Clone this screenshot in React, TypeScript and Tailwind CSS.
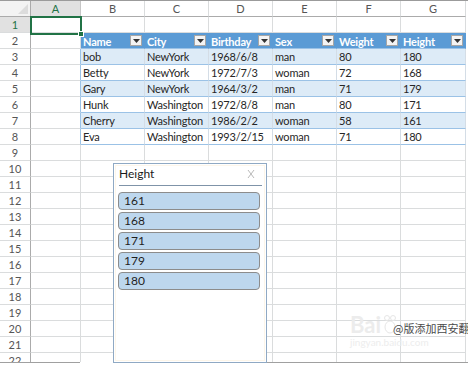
import clsx from "clsx";

const letters = ["A", "B", "C", "D", "E", "F", "G"];
const colW = ["w-[50px]", "w-16", "w-16", "w-16", "w-16", "w-16", "w-[65px]"];
const heads = ["Name", "City", "Birthday", "Sex", "Weight", "Height"];
const people = [
  ["bob", "NewYork", "1968/6/8", "man", "80", "180"],
  ["Betty", "NewYork", "1972/7/3", "woman", "72", "168"],
  ["Gary", "NewYork", "1964/3/2", "man", "71", "179"],
  ["Hunk", "Washington", "1972/8/8", "man", "80", "171"],
  ["Cherry", "Washington", "1986/2/2", "woman", "58", "161"],
  ["Eva", "Washington", "1993/2/15", "woman", "71", "180"],
];
const heights = ["161", "168", "171", "179", "180"];
const rows = Array.from({ length: 22 }, (_, i) => i + 1);

// 表の見出しにある絞り込みボタン
function FilterButton() {
  return (
    <span className="mr-[2px] flex h-[11px] w-[12px] shrink-0 items-center justify-center border border-[#a6a6a6] bg-[#f4f4f4]">
      <svg width="7" height="4" viewBox="0 0 7 4">
        <path d="M0 0h7L3.5 4z" fill="#333" />
      </svg>
    </span>
  );
}

function Cell({ n, c }: { n: number; c: number }) {
  const person = n >= 3 && n <= 8 ? people[n - 3] : null;
  if (c === 0) {
    return (
      <div
        className={clsx(
          "h-full shrink-0 border-r border-b border-b-[#dadcdd]",
          colW[c],
          n >= 3 && n <= 8 ? "border-r-[#9bc2e6]" : "border-r-[#dadcdd]"
        )}
      />
    );
  }
  if (n === 2) {
    return (
      <div
        className={clsx(
          "flex h-full shrink-0 items-center justify-between border-r border-b border-r-[#5b9bd5] border-b-[#9bc2e6] bg-[#5b9bd5] pl-[2px]",
          colW[c]
        )}
      >
        <span className="pt-[1px] text-[11px] font-bold leading-[15px] tracking-[-0.2px] text-white">
          {heads[c - 1]}
        </span>
        <FilterButton />
      </div>
    );
  }
  if (person) {
    return (
      <div
        className={clsx(
          "flex h-full shrink-0 items-end whitespace-nowrap border-r border-b border-r-[#d4dde6] border-b-[#9bc2e6] pl-[2px] text-[11px] leading-[15px] tracking-[-0.2px] text-[#262626]",
          colW[c],
          n % 2 === 1 ? "bg-[#ddebf7]" : "bg-white"
        )}
      >
        {person[c - 1]}
      </div>
    );
  }
  return <div className={clsx("h-full shrink-0 border-r border-b border-[#dadcdd]", colW[c])} />;
}

function Row({ n }: { n: number }) {
  return (
    <div className="flex h-4 shrink-0">
      <div
        className={clsx(
          "flex h-full w-[31px] shrink-0 items-end justify-center border-r border-b border-r-[#ababab] border-b-[#dadcdd] text-[11px] leading-[15px]",
          n === 1 ? "bg-[#e1e1e1] text-[#217346]" : "text-[#555]"
        )}
      >
        {n}
      </div>
      {colW.map((_, c) => (
        <Cell key={c} n={n} c={c} />
      ))}
    </div>
  );
}

function Slicer() {
  return (
    <div className="absolute left-[113px] top-[163px] h-[200px] w-[154px] border border-[#8fa9c4] bg-white p-[1px]">
      <div className="flex h-full flex-col border border-[#fdf6ea]">
        <div className="ml-[3px] mr-[2px] flex h-[20px] items-start justify-between border-b border-[#7f93a8]">
          <span className="pt-[1px] text-[12px] leading-[14px] text-[#1a1a1a]">Height</span>
          <svg width="8" height="10" viewBox="0 0 8 10" className="mr-[7px] mt-[3px]">
            <path d="M1 1l6 8M7 1L1 9" stroke="#b9b9b9" strokeWidth="1" fill="none" />
          </svg>
        </div>
        <div className="ml-[2px] mr-[4px] mt-[6px] flex flex-col gap-[2px]">
          {heights.map((h) => (
            <div
              key={h}
              className="flex h-[18px] items-center rounded-[4px] border border-[#8c8c8c] bg-[#bdd7ee] pl-[5px] text-[12px] leading-[14px] text-[#1f1f1f]"
            >
              {h}
            </div>
          ))}
        </div>
      </div>
    </div>
  );
}

function Watermark() {
  return (
    <div className="pointer-events-none absolute left-[350px] top-[314px] flex flex-col">
      <div className="flex items-end gap-[2px] whitespace-nowrap">
        <span className="text-[22px] font-bold leading-[22px] text-[#ececec]">Bai</span>
        <svg width="14" height="22" viewBox="0 0 14 22">
          <circle cx="4" cy="4" r="2.5" fill="none" stroke="#e6e6e6" />
          <circle cx="10" cy="4" r="2.5" fill="none" stroke="#e6e6e6" />
          <ellipse cx="7" cy="13" rx="5" ry="6" fill="none" stroke="#e6e6e6" />
        </svg>
        <span className="ml-[-6px] whitespace-nowrap text-[11px] leading-[16px] text-[#4a4a4a] font-['Noto_Sans_CJK_SC',sans-serif]">
          @版添加西安翻
        </span>
      </div>
      <span className="text-[10px] leading-[12px] text-[#ededed]">jingyan.baidu.com</span>
    </div>
  );
}

export default function App() {
  return (
    <div className="relative h-[366px] w-[468px] overflow-hidden bg-white font-['Lato','Liberation_Sans',sans-serif]">
      <div className="flex h-[362px] flex-col overflow-hidden">
        <div className="flex h-[17px] shrink-0 border-t border-[#9b9b9b]">
          <div className="relative h-full w-[31px] shrink-0 border-r border-b border-[#ababab] bg-[#f3f3f3]">
            <svg width="10" height="10" viewBox="0 0 10 10" className="absolute right-[2px] bottom-[2px]">
              <path d="M10 0V10H0z" fill="#dcdcdc" />
            </svg>
          </div>
          {letters.map((l, c) => (
            <div
              key={l}
              className={clsx(
                "flex h-full shrink-0 items-end justify-center border-r border-b text-[11px] leading-[15px]",
                colW[c],
                c === 0
                  ? "border-r-[#c6c6c6] border-b-[#217346] bg-[#e1e1e1] text-[#217346]"
                  : "border-r-[#dadcdd] border-b-[#ababab] bg-white text-[#555]"
              )}
            >
              {l}
            </div>
          ))}
        </div>
        {rows.map((n) => (
          <Row key={n} n={n} />
        ))}
      </div>
      <div className="flex h-[4px]">
        <div className="w-[80px] border-t border-[#a0a0a0]" />
        <div className="w-[53px]" />
        <div className="flex-1 border-t border-[#a0a0a0]" />
      </div>

      <div className="absolute left-[30px] top-[16px] h-[19px] w-[52px] border-2 border-[#217346]">
        <div className="absolute right-[-4px] bottom-[-4px] h-[6px] w-[6px] border border-white bg-[#217346]" />
      </div>

      <Slicer />
      <Watermark />
    </div>
  );
}
